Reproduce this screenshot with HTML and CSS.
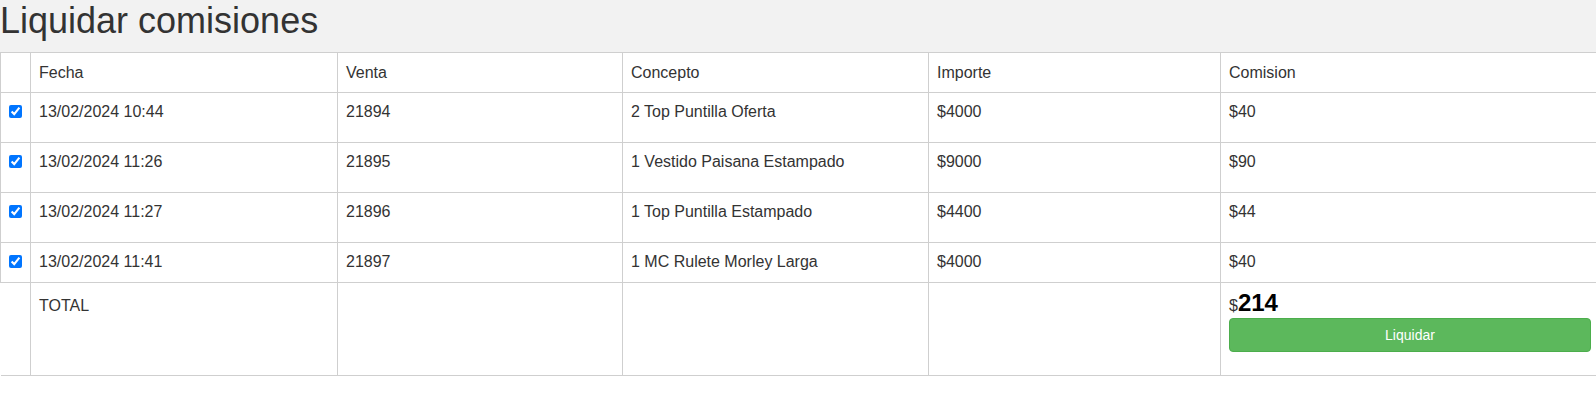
FILE: index.html
```html
<!DOCTYPE html>
<html lang="es">
<head>
    <meta charset="UTF-8">
    <title>Liquidar comisiones</title>
    <link rel="stylesheet" href="styles.css">
</head>
<body>

    <!-- Titulo -->
    <div class="page-header">
        <h1>Liquidar comisiones</h1>
    </div>

    <!-- Tabla de ventas -->
    <table class="comisiones">
        <colgroup>
            <col class="col-check">
            <col class="col-fecha">
            <col class="col-venta">
            <col class="col-concepto">
            <col class="col-importe">
            <col>
        </colgroup>
        <thead>
            <tr>
                <th></th>
                <th>Fecha</th>
                <th>Venta</th>
                <th>Concepto</th>
                <th>Importe</th>
                <th>Comision</th>
            </tr>
        </thead>
        <tbody>
            <tr class="tall">
                <td class="check"><input type="checkbox" checked></td>
                <td>13/02/2024 10:44</td>
                <td>21894</td>
                <td>2 Top Puntilla Oferta</td>
                <td>$4000</td>
                <td>$40</td>
            </tr>
            <tr class="tall">
                <td class="check"><input type="checkbox" checked></td>
                <td>13/02/2024 11:26</td>
                <td>21895</td>
                <td>1 Vestido Paisana Estampado</td>
                <td>$9000</td>
                <td>$90</td>
            </tr>
            <tr class="tall">
                <td class="check"><input type="checkbox" checked></td>
                <td>13/02/2024 11:27</td>
                <td>21896</td>
                <td>1 Top Puntilla Estampado</td>
                <td>$4400</td>
                <td>$44</td>
            </tr>
            <tr>
                <td class="check"><input type="checkbox" checked></td>
                <td>13/02/2024 11:41</td>
                <td>21897</td>
                <td>1 MC Rulete Morley Larga</td>
                <td>$4000</td>
                <td>$40</td>
            </tr>
        </tbody>
        <tfoot>
            <tr class="total-row">
                <td class="empty"></td>
                <td>TOTAL</td>
                <td></td>
                <td></td>
                <td></td>
                <td class="total-cell">
                    <div class="total">$<strong>214</strong></div>
                    <button type="button" class="btn-liquidar">Liquidar</button>
                </td>
            </tr>
        </tfoot>
    </table>

</body>
</html>
```

FILE: styles.css
```css
body {
    font-family: "Liberation Sans", Arial, sans-serif;
    font-size: 16px;
    color: #333;
    margin: 0;
    padding: 0;
    overflow: hidden;
}
.page-header {
    background-color: #f2f2f2;
    height: 52px;
}
.page-header h1 {
    margin: 0;
    padding: 1px 0 0 0;
    font-size: 36px;
    font-weight: normal;
    line-height: 40px;
}
table.comisiones {
    width: 100%;
    border-collapse: collapse;
    table-layout: fixed;
}
.col-check { width: 30px; }
.col-fecha { width: 307px; }
.col-venta { width: 285px; }
.col-concepto { width: 306px; }
.col-importe { width: 292px; }
th, td {
    border: 1px solid #cfcfcf;
    padding: 8px;
    text-align: left;
    vertical-align: top;
    font-weight: normal;
    line-height: 22px;
}
th:last-child, td:last-child {
    border-right: none;
}
thead th {
    height: 22px;
    padding-top: 9px;
}
tbody td {
    height: 23px;
}
tr.tall td {
    height: 33px;
}
td.check {
    text-align: center;
    padding: 8px 0;
}
td.check input {
    margin: 4px 0 0 0;
    width: 13px;
    height: 13px;
}
tfoot td {
    height: 76px;
    vertical-align: baseline;
}
tfoot td.empty {
    border-left: none;
}
.total {
    line-height: 24px;
    font-size: 16px;
}
.total strong {
    font-size: 24px;
    color: #000;
}
.total-cell {
    padding-right: 5px;
}
.btn-liquidar {
    display: block;
    width: 100%;
    margin-top: 0;
    height: 34px;
    background-color: #5cb85c;
    border: 1px solid #4cae4c;
    border-radius: 4px;
    color: #fff;
    font-family: "Liberation Sans", Arial, sans-serif;
    font-size: 14px;
}
```
